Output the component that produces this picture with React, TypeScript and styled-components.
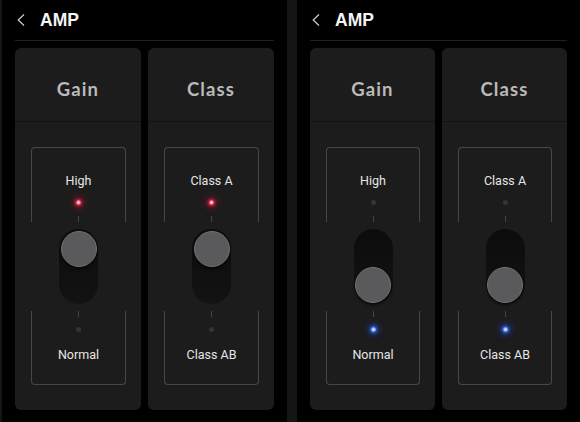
import styled, { createGlobalStyle } from "styled-components";

const GlobalStyle = createGlobalStyle`
  html, body {
    margin: 0;
    padding: 0;
    background: #000;
  }
  body {
    width: 580px;
    height: 422px;
    overflow: hidden;
    font-family: Roboto, "Liberation Sans", Arial, sans-serif;
  }
`

const Page = styled.div`
  display: flex;
  height: 422px;
  background: #000;
`

const Strip = styled.div<{ $w: number }>`
  width: ${(p) => p.$w}px;
  flex: none;
  background: #151515;
`

const Screen = styled.div<{ $w?: number }>`
  ${(p) => (p.$w ? `width: ${p.$w}px; flex: none;` : "flex: 1;")}
  padding: 0 13px;
  display: flex;
  flex-direction: column;
  box-sizing: border-box;
`

const Header = styled.div`
  height: 40px;
  border-bottom: 1px solid #1f1f1f;
  display: flex;
  align-items: center;
  padding-left: 2px;
`

const Back = styled.svg`
  width: 8px;
  height: 12px;
  margin-right: 15px;
`

const HeaderTitle = styled.span`
  font-family: "Liberation Sans", Arial, sans-serif;
  font-weight: 700;
  font-size: 17.5px;
  color: #f4f4f4;
`

const CardRow = styled.div`
  display: flex;
  gap: 7px;
  margin-top: 7px;
`

const Card = styled.div`
  flex: 1;
  height: 362px;
  background: #1c1c1c;
  border-radius: 6px;
  display: flex;
  flex-direction: column;
  overflow: hidden;
`

const CardHead = styled.div`
  height: 74px;
  box-sizing: border-box;
  padding-top: 8px;
  border-bottom: 1px solid #121212;
  display: flex;
  align-items: center;
  justify-content: center;
  font-family: Lato, "Open Sans", sans-serif;
  font-weight: 700;
  font-size: 18.5px;
  letter-spacing: 1.1px;
  color: #bababa;
`

const CardBody = styled.div`
  padding: 25px 15px 0 16px;
`

const Frame = styled.div`
  display: flex;
  flex-direction: column;
  align-items: center;
`

const Bracket = styled.div<{ $side: "top" | "bottom" }>`
  width: 100%;
  box-sizing: border-box;
  border: 1px solid #474747;
  ${(p) =>
    p.$side === "top"
      ? "border-bottom: none; border-radius: 4px 4px 0 0; height: 75px; padding-top: 26px;"
      : "border-top: none; border-radius: 0 0 4px 4px; height: 74px;"}
  display: flex;
  flex-direction: column;
  align-items: center;
`

const Label = styled.div`
  font-size: 12.5px;
  line-height: 14px;
  color: #e6e6e6;
  white-space: nowrap;
`

const Tick = styled.div<{ $top?: boolean }>`
  width: 1px;
  height: 6px;
  background: #444;
  ${(p) => (p.$top ? "margin-top: auto;" : "")}
`

const Led = styled.div<{ $color?: "red" | "blue" }>`
  width: 5px;
  height: 5px;
  border-radius: 50%;
  background: ${(p) =>
    p.$color === "red"
      ? "radial-gradient(circle, #fff0f2 0%, #ff6a84 50%, #f0204a 100%)"
      : p.$color === "blue"
      ? "radial-gradient(circle, #f2f6ff 0%, #80acff 50%, #2f66ff 100%)"
      : "#353535"};
  box-shadow: ${(p) =>
    p.$color === "red"
      ? "0 0 3px 1px rgba(255, 40, 80, 0.8), 0 0 7px 3px rgba(200, 10, 50, 0.45)"
      : p.$color === "blue"
      ? "0 0 3px 1px rgba(60, 120, 255, 0.85), 0 0 7px 3px rgba(30, 80, 255, 0.45)"
      : "none"};
`

const Track = styled.div<{ $down: boolean }>`
  margin: 7px 0;
  width: 39px;
  height: 75px;
  box-sizing: border-box;
  padding: 1.5px;
  border-radius: 20px;
  background: linear-gradient(#0c0c0c, #131313);
  display: flex;
  flex-direction: column;
  align-items: center;
  justify-content: ${(p) => (p.$down ? "flex-end" : "flex-start")};
`

const Knob = styled.div`
  width: 36px;
  height: 36px;
  box-sizing: border-box;
  border-radius: 50%;
  background: #5a5a5c;
  border: 1px solid #707072;
  box-shadow: 0 2px 3px rgba(0, 0, 0, 0.6);
`

type Pos = "top" | "bottom"

const Switch = ({ top, bottom, pos }: { top: string; bottom: string; pos: Pos }) => (
  <Frame>
    <Bracket $side="top">
      <Label>{top}</Label>
      <Led style={{ marginTop: 12 }} $color={pos === "top" ? "red" : undefined} />
      <Tick $top />
    </Bracket>
    <Track $down={pos === "bottom"}>
      <Knob />
    </Track>
    <Bracket $side="bottom">
      <Tick />
      <Led style={{ marginTop: 10 }} $color={pos === "bottom" ? "blue" : undefined} />
      <Label style={{ marginTop: 16 }}>{bottom}</Label>
    </Bracket>
  </Frame>
)

const AmpScreen = ({ pos, width }: { pos: Pos; width?: number }) => (
  <Screen $w={width}>
    <Header>
      <Back viewBox="0 0 8 12">
        <polyline points="7,0.5 1.2,6 7,11.5" fill="none" stroke="#cfcfcf" strokeWidth="1.2" />
      </Back>
      <HeaderTitle>AMP</HeaderTitle>
    </Header>
    <CardRow>
      <Card>
        <CardHead>Gain</CardHead>
        <CardBody>
          <Switch top="High" bottom="Normal" pos={pos} />
        </CardBody>
      </Card>
      <Card>
        <CardHead>Class</CardHead>
        <CardBody>
          <Switch top="Class A" bottom="Class AB" pos={pos} />
        </CardBody>
      </Card>
    </CardRow>
  </Screen>
)

const App = () => (
  <>
    <GlobalStyle />
    <Page>
      <Strip $w={2} />
      <AmpScreen pos="top" width={285} />
      <Strip $w={10} />
      <AmpScreen pos="bottom" />
    </Page>
  </>
)

export default App
